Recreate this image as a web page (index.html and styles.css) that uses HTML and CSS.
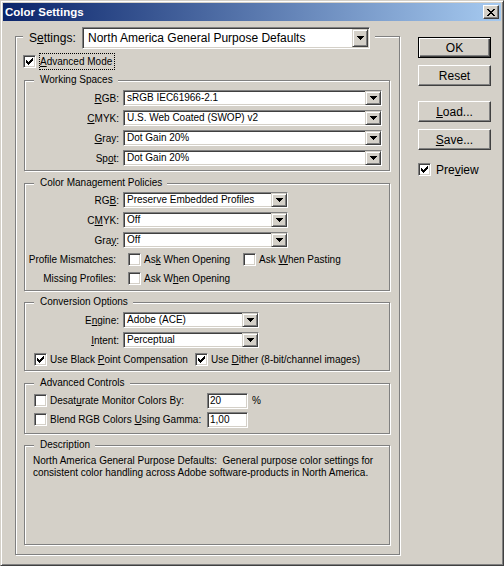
FILE: index.html
```html
<!DOCTYPE html>
<html>
<head>
<meta charset="utf-8">
<title>Color Settings</title>
<link rel="stylesheet" href="styles.css">
</head>
<body>
<div class="window">
  <div class="titlebar">
    <span class="title">Color Settings</span>
    <span class="close"><svg width="8" height="7" viewBox="0 0 8 7"><path d="M0 0h2v1H0zM6 0h2v1H6zM1 1h2v1H1zM5 1h2v1H5zM2 2h4v1H2zM3 3h2v1H3zM2 4h4v1H2zM1 5h2v1H1zM5 5h2v1H5zM0 6h2v1H0zM6 6h2v1H6z" fill="#000"/></svg></span>
  </div>
  <div class="client">
    <div class="outer">
      <div class="outer-legend">
        <span class="big-label">S<u>e</u>ttings:</span>
        <div class="combo combo-big"><span class="val">North America General Purpose Defaults</span><span class="drop"><svg width="7" height="4" viewBox="0 0 7 4"><path d="M0 0h7v1H0zM1 1h5v1H1zM2 2h3v1H2zM3 3h1v1H3z" fill="#000"/></svg></span></div>
      </div>
      <div class="adv-row">
        <span class="cb"><svg width="11" height="11" viewBox="1 1 11 11"><path d="M3 5h1v3H3zM4 6h1v3H4zM5 7h1v3H5zM6 6h1v3H6zM7 5h1v3H7zM8 4h1v3H8zM9 3h1v3H9z" fill="#000"/></svg></span>
        <span class="focus"><u>A</u>dvanced Mode</span>
      </div>

      <div class="group g-ws">
        <div class="legend">Working Spaces</div>
        <div class="rows r-ws">
          <div class="row"><span class="lbl"><u>R</u>GB:</span><div class="combo w-ws"><span class="val">sRGB IEC61966-2.1</span><span class="drop"><svg width="7" height="4" viewBox="0 0 7 4"><path d="M0 0h7v1H0zM1 1h5v1H1zM2 2h3v1H2zM3 3h1v1H3z" fill="#000"/></svg></span></div></div>
          <div class="row"><span class="lbl"><u>C</u>MYK:</span><div class="combo w-ws"><span class="val">U.S. Web Coated (SWOP) v2</span><span class="drop"><svg width="7" height="4" viewBox="0 0 7 4"><path d="M0 0h7v1H0zM1 1h5v1H1zM2 2h3v1H2zM3 3h1v1H3z" fill="#000"/></svg></span></div></div>
          <div class="row"><span class="lbl"><u>G</u>ray:</span><div class="combo w-ws"><span class="val">Dot Gain 20%</span><span class="drop"><svg width="7" height="4" viewBox="0 0 7 4"><path d="M0 0h7v1H0zM1 1h5v1H1zM2 2h3v1H2zM3 3h1v1H3z" fill="#000"/></svg></span></div></div>
          <div class="row"><span class="lbl">Sp<u>o</u>t:</span><div class="combo w-ws"><span class="val">Dot Gain 20%</span><span class="drop"><svg width="7" height="4" viewBox="0 0 7 4"><path d="M0 0h7v1H0zM1 1h5v1H1zM2 2h3v1H2zM3 3h1v1H3z" fill="#000"/></svg></span></div></div>
        </div>
      </div>

      <div class="group g-cmp">
        <div class="legend">Color Management Policies</div>
        <div class="rows r-cmp">
          <div class="row"><span class="lbl">RG<u>B</u>:</span><div class="combo w-cmp"><span class="val">Preserve Embedded Profiles</span><span class="drop"><svg width="7" height="4" viewBox="0 0 7 4"><path d="M0 0h7v1H0zM1 1h5v1H1zM2 2h3v1H2zM3 3h1v1H3z" fill="#000"/></svg></span></div></div>
          <div class="row"><span class="lbl">C<u>M</u>YK:</span><div class="combo w-cmp"><span class="val">Off</span><span class="drop"><svg width="7" height="4" viewBox="0 0 7 4"><path d="M0 0h7v1H0zM1 1h5v1H1zM2 2h3v1H2zM3 3h1v1H3z" fill="#000"/></svg></span></div></div>
          <div class="row"><span class="lbl">Gra<u>y</u>:</span><div class="combo w-cmp"><span class="val">Off</span><span class="drop"><svg width="7" height="4" viewBox="0 0 7 4"><path d="M0 0h7v1H0zM1 1h5v1H1zM2 2h3v1H2zM3 3h1v1H3z" fill="#000"/></svg></span></div></div>
          <div class="crow">
            <span class="lbl2">Profile Mismatches:</span>
            <span class="opt opt-open"><span class="cb"></span><span class="txt">As<u>k</u> When Opening</span></span>
            <span class="opt"><span class="cb"></span><span class="txt">Ask <u>W</u>hen Pasting</span></span>
          </div>
          <div class="crow">
            <span class="lbl2">Missing Profiles:</span>
            <span class="opt"><span class="cb"></span><span class="txt">Ask W<u>h</u>en Opening</span></span>
          </div>
        </div>
      </div>

      <div class="group g-conv">
        <div class="legend">Conversion Options</div>
        <div class="rows r-conv">
          <div class="row"><span class="lbl">E<u>n</u>gine:</span><div class="combo w-conv"><span class="val">Adobe (ACE)</span><span class="drop"><svg width="7" height="4" viewBox="0 0 7 4"><path d="M0 0h7v1H0zM1 1h5v1H1zM2 2h3v1H2zM3 3h1v1H3z" fill="#000"/></svg></span></div></div>
          <div class="row"><span class="lbl"><u>I</u>ntent:</span><div class="combo w-conv"><span class="val">Perceptual</span><span class="drop"><svg width="7" height="4" viewBox="0 0 7 4"><path d="M0 0h7v1H0zM1 1h5v1H1zM2 2h3v1H2zM3 3h1v1H3z" fill="#000"/></svg></span></div></div>
          <div class="crow pad-left">
            <span class="opt opt-bpc"><span class="cb"><svg width="11" height="11" viewBox="1 1 11 11"><path d="M3 5h1v3H3zM4 6h1v3H4zM5 7h1v3H5zM6 6h1v3H6zM7 5h1v3H7zM8 4h1v3H8zM9 3h1v3H9z" fill="#000"/></svg></span><span class="txt">Use Black <u>P</u>oint Compensation</span></span>
            <span class="opt"><span class="cb"><svg width="11" height="11" viewBox="1 1 11 11"><path d="M3 5h1v3H3zM4 6h1v3H4zM5 7h1v3H5zM6 6h1v3H6zM7 5h1v3H7zM8 4h1v3H8zM9 3h1v3H9z" fill="#000"/></svg></span><span class="txt">Use <u>D</u>ither (8-bit/channel images)</span></span>
          </div>
        </div>
      </div>

      <div class="group g-adv">
        <div class="legend">Advanced Controls</div>
        <div class="rows r-adv">
          <div class="crow2 pad-left">
            <span class="opt opt-adv"><span class="cb"></span><span class="txt">Desat<u>u</u>rate Monitor Colors By:</span></span>
            <span class="field">20</span><span class="unit">%</span>
          </div>
          <div class="crow2 pad-left">
            <span class="opt opt-adv"><span class="cb"></span><span class="txt">Blend RGB Colors <u>U</u>sing Gamma:</span></span>
            <span class="field">1,00</span>
          </div>
        </div>
      </div>

      <div class="group g-desc">
        <div class="legend">Description</div>
        <p class="desc">North America General Purpose Defaults:&nbsp; General purpose color settings for<br>consistent color handling across Adobe software-products in North America.</p>
      </div>
    </div>

    <div class="side">
      <div class="btn btn-default">OK</div>
      <div class="btn btn-reset">Reset</div>
      <div class="btn btn-load"><u>L</u>oad...</div>
      <div class="btn btn-save"><u>S</u>ave...</div>
      <div class="preview"><span class="cb"><svg width="11" height="11" viewBox="1 1 11 11"><path d="M3 5h1v3H3zM4 6h1v3H4zM5 7h1v3H5zM6 6h1v3H6zM7 5h1v3H7zM8 4h1v3H8zM9 3h1v3H9z" fill="#000"/></svg></span><span class="ptxt">Pre<u>v</u>iew</span></div>
    </div>
  </div>
</div>
</body>
</html>
```

FILE: styles.css
```css
* { box-sizing: border-box; }
html, body { margin: 0; padding: 0; }
body {
  width: 504px;
  height: 566px;
  overflow: hidden;
  background: #d4d0c8;
  font-family: "Liberation Sans", Arial, sans-serif;
  font-size: 10px;
  color: #000;
}
u { text-decoration: underline; text-underline-offset: 1px; }

.window {
  width: 504px;
  height: 566px;
  border: 1px solid;
  border-color: #d4d0c8 #404040 #404040 #d4d0c8;
  box-shadow: inset 1px 1px 0 #fff, inset -1px -1px 0 #808080;
  padding: 2px;
  background: #d4d0c8;
  display: flex;
  flex-direction: column;
}

.titlebar {
  height: 18px;
  flex: none;
  background: linear-gradient(to right, #0a246a, #a6caf0);
  display: flex;
  align-items: center;
  justify-content: space-between;
  padding: 0 2px;
}
.title {
  color: #fff;
  font-weight: bold;
  font-size: 11.5px;
  line-height: 18px;
}
.close {
  width: 16px;
  height: 14px;
  background: #d4d0c8;
  border: 1px solid;
  border-color: #fff #404040 #404040 #fff;
  box-shadow: inset -1px -1px 0 #808080;
  display: flex;
  align-items: center;
  justify-content: center;
}
.close svg { display: block; }

.client {
  display: flex;
  align-items: flex-start;
  padding: 15px 0 0 12px;
}

/* etched group boxes */
.outer, .group {
  border: 1px solid #808080;
  box-shadow: inset 1px 1px 0 #fff, 1px 1px 0 #fff;
}
.outer {
  width: 385px;
  height: 519px;
  flex: none;
}
.outer-legend {
  display: flex;
  align-items: center;
  width: fit-content;
  height: 22px;
  margin: -10px 0 0 7px;
  padding: 0 5px 0 6px;
  background: #d4d0c8;
}
.big-label {
  font-size: 12px;
  width: 53px;
}

/* combo boxes */
.combo {
  display: flex;
  height: 16px;
  border: 1px solid;
  border-color: #808080 #fff #fff #808080;
  box-shadow: inset 1px 1px 0 #404040, inset -1px -1px 0 #d4d0c8;
  background: #fff;
  flex: none;
}
.combo .val {
  flex: 1;
  padding-left: 3px;
  line-height: 14px;
  white-space: nowrap;
  overflow: hidden;
}
.drop {
  width: 16px;
  height: 100%;
  flex: none;
  background: #d4d0c8;
  border: 1px solid;
  border-color: #d4d0c8 #404040 #404040 #d4d0c8;
  box-shadow: inset 1px 1px 0 #fff, inset -1px -1px 0 #808080;
  display: flex;
  align-items: center;
  justify-content: center;
}
.drop svg { display: block; }
.combo-big {
  width: 288px;
  height: 22px;
  padding: 1px;
  font-size: 12px;
}
.combo-big .val { line-height: 18px; padding-left: 4px; }
.w-ws { width: 259px; }
.w-cmp { width: 165px; }
.w-conv { width: 136px; }

/* checkbox */
.cb {
  width: 13px;
  height: 13px;
  flex: none;
  background: #fff;
  border: 1px solid;
  border-color: #808080 #fff #fff #808080;
  box-shadow: inset 1px 1px 0 #404040, inset -1px -1px 0 #d4d0c8;
}
.cb svg { display: block; }

.adv-row {
  display: flex;
  align-items: center;
  height: 17px;
  margin: 4px 0 0 7px;
}
.focus {
  margin-left: 3px;
  height: 17px;
  line-height: 15px;
  border: 1px dotted #000;
  padding: 0 2px 0 0;
}

.group {
  width: 366px;
  margin-left: 8px;
}
.g-ws { height: 91px; margin-top: 10px; }
.g-cmp { height: 108px; margin-top: 12px; }
.g-conv { height: 69px; margin-top: 11px; }
.g-adv { height: 51px; margin-top: 12px; }
.g-desc { height: 100px; margin-top: 11px; }

.legend {
  width: fit-content;
  height: 12px;
  line-height: 12px;
  margin: -7px 0 0 9px;
  padding: 0 5px 0 6px;
  background: #d4d0c8;
}

.r-ws { margin-top: 2px; }
.r-cmp { margin-top: 1px; }
.r-conv { margin-top: 2px; }
.r-adv { margin-top: 2px; }

.row {
  display: flex;
  align-items: center;
  height: 20px;
}
.lbl {
  width: 94px;
  margin-right: 4px;
  text-align: right;
  white-space: nowrap;
}
.crow {
  display: flex;
  align-items: center;
  height: 19px;
}
.crow2 {
  display: flex;
  align-items: center;
  height: 19px;
}
.pad-left { padding-left: 9px; }
.lbl2 {
  width: 91px;
  margin-right: 12px;
  text-align: right;
  white-space: nowrap;
}
.opt {
  display: flex;
  align-items: center;
  white-space: nowrap;
}
.opt .txt { margin-left: 3px; }
.opt-open { width: 115px; }
.opt-bpc { width: 161px; }
.opt-adv { width: 173px; }

.field {
  width: 41px;
  height: 16px;
  background: #fff;
  border: 1px solid;
  border-color: #808080 #fff #fff #808080;
  box-shadow: inset 1px 1px 0 #404040, inset -1px -1px 0 #d4d0c8;
  padding-left: 2px;
  line-height: 14px;
}
.unit { margin-left: 4px; }

.desc {
  margin: 4px 0 0 0;
  padding-left: 8px;
  line-height: 12px;
  white-space: nowrap;
}

/* right column */
.side {
  display: flex;
  flex-direction: column;
  width: 73px;
  margin: 1px 0 0 18px;
  font-size: 12px;
}
.btn {
  width: 73px;
  height: 21px;
  background: #d4d0c8;
  border: 1px solid;
  border-color: #fff #404040 #404040 #fff;
  box-shadow: inset -1px -1px 0 #808080;
  display: flex;
  align-items: center;
  justify-content: center;
}
.btn-default {
  border-color: #000;
  box-shadow: inset 1px 1px 0 #fff, inset -1px -1px 0 #404040, inset -2px -2px 0 #808080;
}
.btn-reset { margin-top: 7px; }
.btn-load { margin-top: 15px; }
.btn-save { margin-top: 7px; }
.preview {
  display: flex;
  align-items: center;
  margin-top: 13px;
  height: 13px;
}
.ptxt { margin-left: 5px; }
```
